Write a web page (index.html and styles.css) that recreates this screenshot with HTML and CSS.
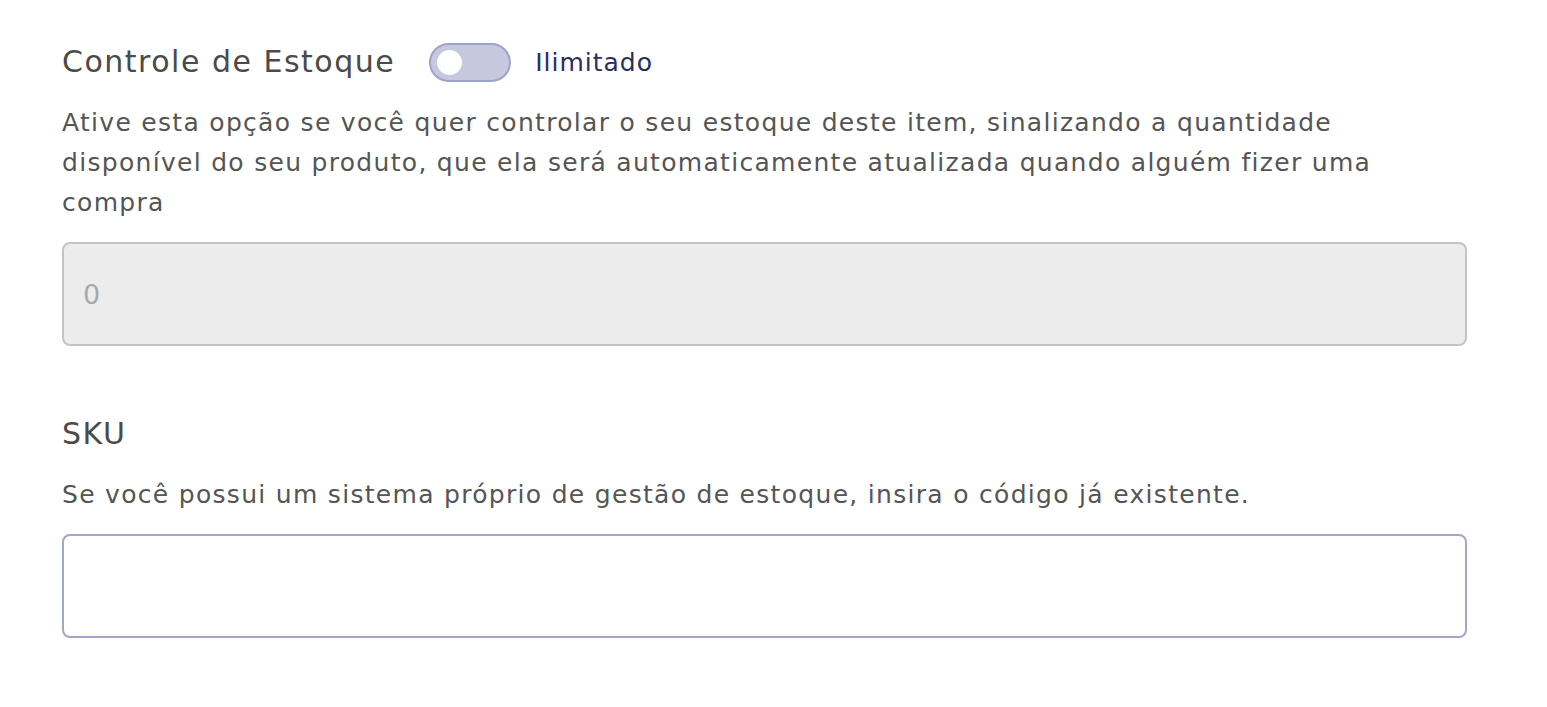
FILE: index.html
```html
<!DOCTYPE html>
<html lang="pt-BR">
<head>
<meta charset="utf-8">
<link rel="stylesheet" href="styles.css">
</head>
<body>
<main class="form">
  <section class="field">
    <div class="field-head">
      <h2 class="field-title">Controle de Estoque</h2>
      <span class="toggle"><span class="toggle-knob"></span></span>
      <span class="toggle-label">Ilimitado</span>
    </div>
    <p class="field-desc">Ative esta opção se você quer controlar o seu estoque deste item, sinalizando a quantidade disponível do seu produto, que ela será automaticamente atualizada quando alguém fizer uma compra</p>
    <input class="input input-disabled" type="text" placeholder="0" disabled>
  </section>
  <section class="field field-sku">
    <h2 class="field-title">SKU</h2>
    <p class="field-desc">Se você possui um sistema próprio de gestão de estoque, insira o código já existente.</p>
    <input class="input" type="text">
  </section>
</main>
</body>
</html>
```
FILE: styles.css
```css
html, body {
  margin: 0;
  padding: 0;
  background: #ffffff;
}
body {
  font-family: "DejaVu Sans", "Open Sans", sans-serif;
  color: #4f4f4f;
}
.form {
  padding: 42px 80px 0 62px;
  width: 1405px;
}
.field-head {
  display: flex;
  align-items: center;
  height: 40px;
}
.field-title {
  margin: 0;
  font-size: 30px;
  font-weight: normal;
  letter-spacing: 1.5px;
  color: #4a4a4a;
  line-height: 40px;
}
.toggle {
  margin-left: 34px;
  height: 35px;
  border: 2px solid #9ea3cb;
  border-radius: 20px;
  background: #c5c8de;
  display: flex;
  align-items: center;
  padding-left: 6px;
  box-sizing: content-box;
  width: 72px;
}
.toggle-knob {
  width: 25px;
  height: 25px;
  border-radius: 50%;
  background: #ffffff;
}
.toggle-label {
  margin-left: 24px;
  font-size: 25px;
  letter-spacing: 1px;
  color: #2b2d5f;
}
.field-desc {
  margin: 21px 0 19px;
  font-size: 25px;
  letter-spacing: 1.3px;
  line-height: 40px;
  color: #555555;
}
.input {
  display: block;
  width: 100%;
  height: 104px;
  box-sizing: border-box;
  border: 2px solid #a2a7c9;
  border-radius: 8px;
  background: #ffffff;
  padding: 0 19px;
  font-family: inherit;
  font-size: 27px;
  outline: none;
}
.input-disabled {
  background: #ececec;
  border-color: #c4c4c4;
}
.input-disabled::placeholder {
  color: #a8a8a8;
}
.field-sku {
  margin-top: 68px;
}
.field-sku .field-desc {
  margin: 21px 0 19px;
}
```
